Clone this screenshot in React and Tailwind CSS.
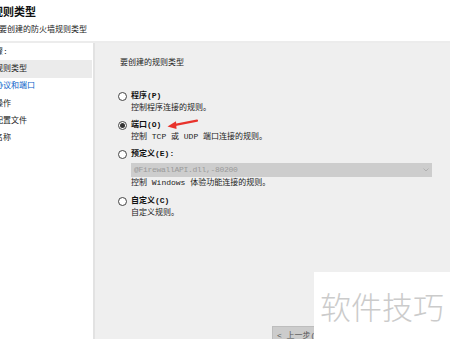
import React from 'react';

const font = { fontFamily: '"Liberation Mono", "Noto Sans CJK SC", monospace' };

const steps = [
  { label: '骤:', active: false },
  { label: '规则类型', active: true },
  { label: '协议和端口', link: true },
  { label: '操作' },
  { label: '配置文件' },
  { label: '名称' },
];

const Radio = ({ checked }) => (
  <span className="w-[9px] h-[9px] rounded-full border border-[#444] bg-white flex items-center justify-center shrink-0 mt-[1.5px]">
    {checked && <span className="w-[5px] h-[5px] rounded-full bg-[#333]"></span>}
  </span>
);

const Option = ({ label, desc, checked, children, className = '' }) => (
  <div className={`flex gap-[4px] ${className}`}>
    <Radio checked={checked} />
    <div className="flex flex-col">
      <span className="font-bold leading-[12px] text-[#111]">{label}</span>
      {children}
      <span className="leading-[12px] text-[#222]">{desc}</span>
    </div>
  </div>
);

export default function App() {
  return (
    <div className="w-[450px] h-[339px] overflow-hidden bg-white relative text-[8px] text-[#111]" style={font}>
      {/* Header */}
      <header className="h-[43px] border-b-2 border-[#ececec] flex flex-col pt-[6px]">
        <h1 className="text-[11px] font-bold leading-[14px] ml-[-8px] text-[#111]">规则类型</h1>
        <p className="leading-[12px] mt-[4px] ml-[-1px] text-[#222]">要创建的防火墙规则类型</p>
      </header>

      <div className="flex h-[296px]">
        {/* Steps */}
        <nav className="w-[95px] shrink-0 bg-white border-r-2 border-[#e2e2e2]">
          {steps.map((s, i) => (
            <div
              key={i}
              className={`flex items-center pr-1 h-[17.3px] ${s.active ? 'bg-[#ebebeb] w-[92px]' : ''}`}
            >
              <span className={`ml-[-5px] whitespace-nowrap ${s.link ? 'text-[#0a62c9]' : 'text-[#222]'}`}>{s.label}</span>
            </div>
          ))}
        </nav>

        {/* Main */}
        <main className="flex-1 bg-[#efefef] relative flex flex-col">
          <p className="mt-[14px] ml-[25px] leading-[12px] text-[#222]">要创建的规则类型</p>

          <div className="ml-[23px] mt-[21px] flex flex-col">
            <Option label="程序(P)" desc="控制程序连接的规则。" />
            <Option className="mt-[5px]" checked label="端口(O)" desc="控制 TCP 或 UDP 端口连接的规则。" />
            <Option className="mt-[5px]" label="预定义(E):" desc="控制 Windows 体验功能连接的规则。">
              <div className="mt-[3px] w-[301px] h-[14px] bg-[#cdcdcd] flex items-center justify-between px-[3px] text-[#9a9a9a]">
                <span className="tracking-[-0.3px]">@FirewallAPI.dll,-80200</span>
                <svg width="6" height="4" viewBox="0 0 6 4"><path d="M0.5 0.5 L3 3 L5.5 0.5" fill="none" stroke="#b0b0b0" strokeWidth="1" /></svg>
              </div>
            </Option>
            <Option className="mt-[6px]" label="自定义(C)" desc="自定义规则。" />
          </div>

          {/* Buttons */}
          <div className="mt-auto h-[13px] flex gap-[6px] pl-[177px]">
            <button className="h-[20px] px-[4px] bg-[#cccccc] border border-[#bdbdbd] text-[#555] leading-[12px] whitespace-nowrap" style={font}>&lt; 上一步(B)</button>
            <button className="h-[20px] px-[4px] bg-[#e1e1e1] border border-[#adadad] text-[#222] whitespace-nowrap" style={font}>下一步(N) &gt;</button>
            <button className="h-[20px] px-[4px] bg-[#e1e1e1] border border-[#adadad] text-[#222] whitespace-nowrap" style={font}>取消</button>
          </div>

          {/* Red annotation arrow */}
          <svg className="absolute left-[71px] top-[76px]" width="32" height="11" viewBox="0 0 32 11">
            <path d="M8 6.2 L31 1.6" stroke="#e8322b" strokeWidth="2.2" strokeLinecap="round" fill="none" />
            <path d="M1.5 7.6 L10 2.2 L10.5 10 Z" fill="#e8322b" />
          </svg>
        </main>
      </div>

      {/* Watermark */}
      <div className="absolute right-0 bottom-0 w-[136px] h-[67px] bg-white flex items-center justify-center">
        <span className="text-[31px] leading-none text-[#cbcbcb] font-light" style={{ fontFamily: '"Noto Sans CJK SC", sans-serif' }}>软件技巧</span>
      </div>
    </div>
  );
}
